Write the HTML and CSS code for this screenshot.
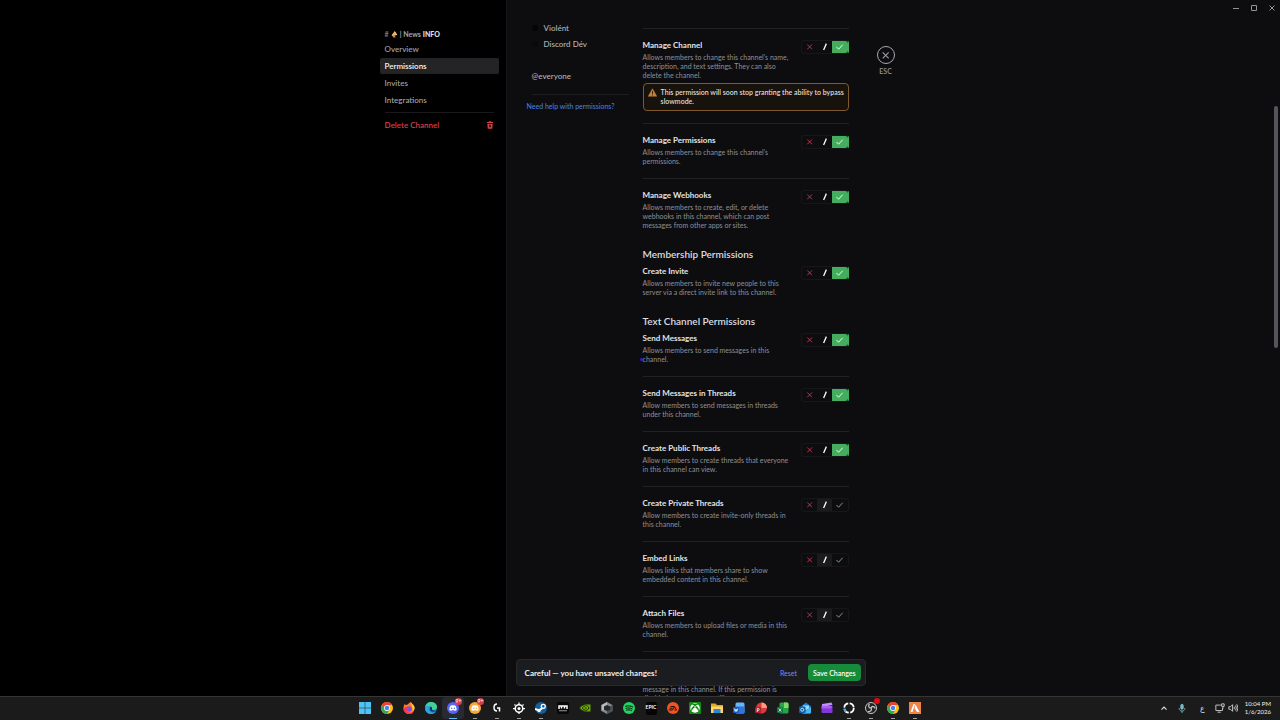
FILE: index.html
```html
<!DOCTYPE html>
<html lang="en">
<head>
  <meta charset="UTF-8" />
  <meta name="viewport" content="width=device-width, initial-scale=1.0"/>
  <title>Channel Settings - Permissions</title>
  <link rel="stylesheet" href="styles.css">
</head>
<body>
  <svg class="sprite" aria-hidden="true">
    <symbol id="i-x" viewBox="0 0 16 16"><path d="M5 4.600l6.400 6.400M11.400 4.600l-6.400 6.400" fill="none" stroke="currentColor" stroke-width="1.300"/></symbol>
    <symbol id="i-slash" viewBox="0 0 16 16"><path d="M10.500 3.500L6.800 12" fill="none" stroke="currentColor" stroke-width="1.700"/></symbol>
    <symbol id="i-check" viewBox="0 0 16 16"><path d="M4 8l2.800 3 5.400-6" fill="none" stroke="currentColor" stroke-width="1.300"/></symbol>
    <symbol id="i-chrome" viewBox="0 0 24 24">
      <circle cx="12" cy="12" r="12" fill="#fbc116"/>
      <path d="M1.6 6A12 12 0 0 1 22.4 6H12z" fill="#ea4335"/>
      <path d="M1.6 6A12 12 0 0 0 12 24l5.2-9-5.2 3-5.2-3z" fill="#34a853"/>
      <path d="M1.6 6l5.2 9L12 6z" fill="#ea4335"/>
      <path d="M1.6 6l5.2 9 5.2 2z" fill="#34a853"/>
      <circle cx="12" cy="12" r="5.8" fill="#fff"/><circle cx="12" cy="12" r="4.4" fill="#4285f4"/>
    </symbol>
    <symbol id="i-discord" viewBox="0 0 24 24">
      <path d="M7 7.5c3-1.300 7-1.300 10 0 1.600 2.500 2.500 5.500 2.300 8.500-1.200 1-2.400 1.500-3.700 1.800l-.9-1.500c-1.800.5-3.600.5-5.400 0l-.9 1.500c-1.300-.3-2.500-.8-3.700-1.800-.2-3 .7-6 2.300-8.500z" fill="#fff"/>
      <circle cx="9.300" cy="12.700" r="1.500"/><circle cx="14.700" cy="12.700" r="1.500"/>
    </symbol>
  </svg>

  <div class="app">
    <aside class="sidebar">
      <nav class="side-nav">
        <h2 class="side-title">
          <span class="hash">#</span>
          <svg class="horn" viewBox="0 0 12 12"><path d="M1 7l5-6 4 6-7 2z" fill="#f2b063"/><path d="M2 8l3 3.500 3-1-2-3z" fill="#d98a4a"/><path d="M6 1l4 6" stroke="#f0cf8a" stroke-width="1.800"/></svg>
          <span>| News</span> <b>INFO</b>
        </h2>
        <a class="side-item" href="#overview">Overview</a>
        <a class="side-item active" href="#permissions">Permissions</a>
        <a class="side-item" href="#invites">Invites</a>
        <a class="side-item" href="#integrations">Integrations</a>
        <hr class="side-line">
        <a class="side-item danger" href="#delete">Delete Channel
          <svg viewBox="0 0 12 12"><path d="M1.500 1.500H4L4.500.5h3L8 1.500h2.500V3h-9z" fill="currentColor"/><path fill-rule="evenodd" d="M2 4h8l-.6 7.500H2.600zM4.500 5.500v4h1v-4zM6.500 5.500v4h1v-4z" fill="currentColor"/></svg>
        </a>
      </nav>
    </aside>

    <main class="content">
      <section class="roles">
        <a class="role" href="#violent"><i class="dot"></i>Violént</a>
        <a class="role" href="#dev"><i class="dot faint"></i>Discord Dév</a>
        <a class="role everyone" href="#everyone">@everyone</a>
        <hr>
        <a class="help" href="#help">Need help with permissions?</a>
      </section>

      <form class="perms" id="perms">
        <div class="perm">
          <div class="perm-text">
            <h3>Manage Channel</h3>
            <p>Allows members to change this channel’s name, description, and text settings. They can also delete the channel.</p>
          </div>
          <fieldset class="toggle" aria-label="Manage Channel">
            <label class="deny"><input type="radio" name="channel" aria-label="Deny"><svg><use href="#i-x"/></svg></label>
            <label class="pass"><input type="radio" name="channel" aria-label="Inherit"><svg><use href="#i-slash"/></svg></label>
            <label class="allow"><input type="radio" name="channel" aria-label="Allow" checked><svg><use href="#i-check"/></svg></label>
          </fieldset>
          <div class="notice">
            <svg viewBox="0 0 20 20"><path d="M10 1.500L19.500 18.500H.5z" fill="#c98235" stroke="#c98235" stroke-linejoin="round"/><path d="M10 7v6M10 14.500v2" stroke="#17120c" stroke-width="2"/></svg>
            <p>This permission will soon stop granting the ability to bypass slowmode.</p>
          </div>
        </div>
        <div class="perm">
          <div class="perm-text">
            <h3>Manage Permissions</h3>
            <p>Allows members to change this channel’s permissions.</p>
          </div>
          <fieldset class="toggle" aria-label="Manage Permissions">
            <label class="deny"><input type="radio" name="permissions" aria-label="Deny"><svg><use href="#i-x"/></svg></label>
            <label class="pass"><input type="radio" name="permissions" aria-label="Inherit"><svg><use href="#i-slash"/></svg></label>
            <label class="allow"><input type="radio" name="permissions" aria-label="Allow" checked><svg><use href="#i-check"/></svg></label>
          </fieldset>
        </div>
        <div class="perm">
          <div class="perm-text">
            <h3>Manage Webhooks</h3>
            <p>Allows members to create, edit, or delete webhooks in this channel, which can post messages from other apps or sites.</p>
          </div>
          <fieldset class="toggle" aria-label="Manage Webhooks">
            <label class="deny"><input type="radio" name="webhooks" aria-label="Deny"><svg><use href="#i-x"/></svg></label>
            <label class="pass"><input type="radio" name="webhooks" aria-label="Inherit"><svg><use href="#i-slash"/></svg></label>
            <label class="allow"><input type="radio" name="webhooks" aria-label="Allow" checked><svg><use href="#i-check"/></svg></label>
          </fieldset>
        </div>

        <h2>Membership Permissions</h2>
        <div class="perm first">
          <div class="perm-text">
            <h3>Create Invite</h3>
            <p>Allows members to invite new people to this server via a direct invite link to this channel.</p>
          </div>
          <fieldset class="toggle" aria-label="Create Invite">
            <label class="deny"><input type="radio" name="invite" aria-label="Deny"><svg><use href="#i-x"/></svg></label>
            <label class="pass"><input type="radio" name="invite" aria-label="Inherit"><svg><use href="#i-slash"/></svg></label>
            <label class="allow"><input type="radio" name="invite" aria-label="Allow" checked><svg><use href="#i-check"/></svg></label>
          </fieldset>
        </div>

        <h2>Text Channel Permissions</h2>
        <div class="perm first">
          <div class="perm-text">
            <h3>Send Messages</h3>
            <p class="marked">Allows members to send messages in this channel.</p>
          </div>
          <fieldset class="toggle" aria-label="Send Messages">
            <label class="deny"><input type="radio" name="send" aria-label="Deny"><svg><use href="#i-x"/></svg></label>
            <label class="pass"><input type="radio" name="send" aria-label="Inherit"><svg><use href="#i-slash"/></svg></label>
            <label class="allow"><input type="radio" name="send" aria-label="Allow" checked><svg><use href="#i-check"/></svg></label>
          </fieldset>
        </div>
        <div class="perm">
          <div class="perm-text">
            <h3>Send Messages in Threads</h3>
            <p>Allow members to send messages in threads under this channel.</p>
          </div>
          <fieldset class="toggle" aria-label="Send Messages in Threads">
            <label class="deny"><input type="radio" name="threads" aria-label="Deny"><svg><use href="#i-x"/></svg></label>
            <label class="pass"><input type="radio" name="threads" aria-label="Inherit"><svg><use href="#i-slash"/></svg></label>
            <label class="allow"><input type="radio" name="threads" aria-label="Allow" checked><svg><use href="#i-check"/></svg></label>
          </fieldset>
        </div>
        <div class="perm">
          <div class="perm-text">
            <h3>Create Public Threads</h3>
            <p>Allow members to create threads that everyone in this channel can view.</p>
          </div>
          <fieldset class="toggle" aria-label="Create Public Threads">
            <label class="deny"><input type="radio" name="public" aria-label="Deny"><svg><use href="#i-x"/></svg></label>
            <label class="pass"><input type="radio" name="public" aria-label="Inherit"><svg><use href="#i-slash"/></svg></label>
            <label class="allow"><input type="radio" name="public" aria-label="Allow" checked><svg><use href="#i-check"/></svg></label>
          </fieldset>
        </div>
        <div class="perm">
          <div class="perm-text">
            <h3>Create Private Threads</h3>
            <p>Allow members to create invite-only threads in this channel.</p>
          </div>
          <fieldset class="toggle" aria-label="Create Private Threads">
            <label class="deny"><input type="radio" name="private" aria-label="Deny"><svg><use href="#i-x"/></svg></label>
            <label class="pass"><input type="radio" name="private" aria-label="Inherit" checked><svg><use href="#i-slash"/></svg></label>
            <label class="allow"><input type="radio" name="private" aria-label="Allow"><svg><use href="#i-check"/></svg></label>
          </fieldset>
        </div>
        <div class="perm">
          <div class="perm-text">
            <h3>Embed Links</h3>
            <p>Allows links that members share to show embedded content in this channel.</p>
          </div>
          <fieldset class="toggle" aria-label="Embed Links">
            <label class="deny"><input type="radio" name="embed" aria-label="Deny"><svg><use href="#i-x"/></svg></label>
            <label class="pass"><input type="radio" name="embed" aria-label="Inherit" checked><svg><use href="#i-slash"/></svg></label>
            <label class="allow"><input type="radio" name="embed" aria-label="Allow"><svg><use href="#i-check"/></svg></label>
          </fieldset>
        </div>
        <div class="perm">
          <div class="perm-text">
            <h3>Attach Files</h3>
            <p>Allows members to upload files or media in this channel.</p>
          </div>
          <fieldset class="toggle" aria-label="Attach Files">
            <label class="deny"><input type="radio" name="attach" aria-label="Deny"><svg><use href="#i-x"/></svg></label>
            <label class="pass"><input type="radio" name="attach" aria-label="Inherit" checked><svg><use href="#i-slash"/></svg></label>
            <label class="allow"><input type="radio" name="attach" aria-label="Allow"><svg><use href="#i-check"/></svg></label>
          </fieldset>
        </div>
        <div class="perm">
          <div class="perm-text">
            <h3>Add Reactions</h3>
            <p>Allows members to add new emoji reactions to a message in this channel. If this permission is disabled, members can still react using any existing reactions.</p>
          </div>
        </div>
      </form>

      <div class="close">
        <button type="button" aria-label="Close"><svg viewBox="0 0 16 16"><use href="#i-x"/></svg></button>
        <span>ESC</span>
      </div>

      <div class="window-buttons">
        <button type="button" aria-label="Minimize"><svg viewBox="0 0 8 8"><path d="M1 4.500h6"/></svg></button>
        <button type="button" aria-label="Maximize"><svg viewBox="0 0 8 8"><path d="M1.500 1.500h5v5h-5z"/></svg></button>
        <button type="button" aria-label="Close window"><svg viewBox="0 0 8 8"><path d="M1.500 1.500l5 5M6.500 1.500l-5 5"/></svg></button>
      </div>
      <div class="scrollbar"></div>

      <div class="unsaved">
        <strong>Careful — you have unsaved changes!</strong>
        <button class="reset" type="reset" form="perms">Reset</button>
        <button class="save" type="submit" form="perms">Save Changes</button>
      </div>
    </main>
  </div>

  <footer class="taskbar">
    <div class="apps">
      <button aria-label="Start"><svg viewBox="0 0 24 24"><path d="M0 0h11.500v11.500H0zM12.500 0H24v11.500H12.500zM0 12.500h11.500V24H0zM12.500 12.500H24V24H12.500z" fill="#4cc2f5"/></svg></button>
      <button aria-label="Chrome"><svg><use href="#i-chrome"/></svg></button>
      <button aria-label="Firefox"><svg viewBox="0 0 24 24"><path d="M12 2c2-1 3-2 4-2 0 3 8 5 7 14-1 6-6 10-11 10S1 20 1 13c0-4 1-7 3-10 0 2 1 3 2 3 2-1 4-1 6-4z" fill="#ff7b29"/><path d="M16 0c0 4 8 5 7 13-1 3-2 3-4 5 2-7-3-10-3-18z" fill="#ffd43b"/><circle cx="12" cy="14" r="5.500" fill="#8a4be0"/><path d="M1 13c1 8 7 11 12 11s8-3 9-6c-4 4-12 5-15-1-1-4 2-5 5-5-2-3-6-3-8-1z" fill="#f5364f"/></svg></button>
      <button aria-label="Edge"><svg viewBox="0 0 24 24"><circle cx="12" cy="12" r="12" fill="#1878c9"/><path d="M0 11C1 4 6 0 12 0c8 0 12 5 12 10 0 4-3 6-7 6-3 0-4-1-3-3 1-5-8-7-14-2z" fill="#41cf9a"/><path d="M0 12c3-5 9-5 11-2-4 3-2 10 4 11 3 0 5-1 7-2-3 4-7 5-10 5C5 24 0 19 0 12z" fill="#2aa5df"/><path d="M11 10c-3 4-1 9 5 9 3 0 5-1 6-2-3 1-6 0-7-1-2-1-1-3-1-4 0-1-1-2-3-2z" fill="#15365d"/></svg></button>
      <button class="open current" aria-label="Discord"><svg viewBox="0 0 24 24"><circle cx="12" cy="12" r="12" fill="#5865f2"/><use href="#i-discord" fill="#5865f2"/></svg><span class="badge">9+</span></button>
      <button class="open" aria-label="Discord Canary"><svg viewBox="0 0 24 24"><circle cx="12" cy="12" r="12" fill="#f5a83c"/><use href="#i-discord" fill="#f5a83c"/></svg><span class="badge">9+</span></button>
      <button class="open" aria-label="Logitech G Hub"><svg viewBox="0 0 24 24"><path d="M12 4C4 4 4 18 12 18M12 12h5v7" fill="none" stroke="#fff" stroke-width="3"/></svg></button>
      <button class="open" aria-label="SteelSeries"><svg viewBox="0 0 24 24"><g fill="none" stroke="#fff"><circle cx="12" cy="13" r="7.500" stroke-width="3"/><path d="M12 6V1M5 13H0M24 13h-5M12 20v4M5 7L3 5M19 7l2-2" stroke-width="2.500"/></g><circle cx="12" cy="13" r="3" fill="#fff"/></svg></button>
      <button class="open" aria-label="Steam"><svg viewBox="0 0 24 24"><circle cx="12" cy="12" r="12" fill="#14609c"/><path d="M0 14l8 3 7-5" fill="none" stroke="#fff" stroke-width="4"/><circle cx="16.500" cy="8.500" r="4" fill="#14609c" stroke="#fff" stroke-width="2.500"/><circle cx="8" cy="17" r="3.500" fill="#fff"/></svg></button>
      <button aria-label="Mixer"><svg viewBox="0 0 24 24"><rect width="24" height="24" rx="4" fill="#070707"/><path d="M4 14V8h16v6M9 8v5M15 8v5" fill="none" stroke="#fff" stroke-width="3"/><path d="M4 17.500h16" stroke="#999" stroke-width="2"/></svg></button>
      <button aria-label="NVIDIA"><svg viewBox="0 0 24 24"><path d="M10 5h13v14H10z" fill="#6aa500"/><path d="M1 12c3-5 7-7 12-6 3 1 5 3 7 6-4 5-8 7-12 6-3-1-5-3-7-6z" fill="#76b900" stroke="#192b0b" stroke-width="2"/><path d="M6 12c2-3 5-4 9 0-3 4-6 4-9 0z" fill="none" stroke="#192b0b" stroke-width="2"/></svg></button>
      <button aria-label="Cube"><svg viewBox="0 0 24 24"><path d="M12 0l11 6v12l-11 6-11-6V6z" fill="#858a90"/><path d="M12 12V0L1 6v12z" fill="#b5b9bd"/><path d="M12 12l11-6v12l-11 6z" fill="#4a4e53"/><path d="M12 6l6 3v6l-6 3-6-3V9z" fill="#24272a"/></svg></button>
      <button aria-label="Spotify"><svg viewBox="0 0 24 24"><circle cx="12" cy="12" r="12" fill="#1ed760"/><path d="M5 8.500c5-1.500 10-1 14.500 1.300M6 12.500c4-1.200 8.500-.8 12.300 1.200M7 16.200c3.500-1 7-.6 10 1" fill="none" stroke="#111" stroke-width="2" stroke-linecap="round"/></svg></button>
      <button class="epic" aria-label="Epic Games"><span>EPIC</span></button>
      <button aria-label="EA"><svg viewBox="0 0 24 24"><circle cx="12" cy="12" r="12" fill="#f05423"/><path d="M7 9h7M5 12.500h6M4 16h7l4-7 4 7h-4" fill="none" stroke="#24100b" stroke-width="2"/></svg></button>
      <button aria-label="Xbox"><svg viewBox="0 0 24 24"><rect width="24" height="24" rx="2" fill="#138a16"/><circle cx="12" cy="12" r="9.500" fill="#fff"/><path d="M5 5c3 0 5 2 7 4 2-2 4-4 7-4-2-2-5-2-7-1-2-1-5-1-7 1zM12 10c4 3 6 6 7 9 2-4 0-8-4-11zM12 10c-4 3-6 6-7 9-2-4 0-8 4-11z" fill="#138a16"/></svg></button>
      <button aria-label="File Explorer"><svg viewBox="0 0 24 24"><path d="M0 3h9l3 3h12v16H0z" fill="#e5a823"/><path d="M0 9h24v13H0z" fill="#ffd766"/><path d="M5 14h14v8H5z" fill="#2b87d3"/></svg></button>
      <button aria-label="Word"><svg viewBox="0 0 24 24"><rect x="5" y="1" width="18" height="22" rx="3" fill="#63b8f5"/><path d="M5 9h18v11a3 3 0 0 1-3 3H8a3 3 0 0 1-3-3z" fill="#2f74e0"/><rect y="10" width="12" height="12" rx="2" fill="#185abd"/><path d="M2.500 13l2 6 1.500-5 1.500 5 2-6" fill="none" stroke="#fff" stroke-width="1.500"/></svg></button>
      <button aria-label="PowerPoint"><svg viewBox="0 0 24 24"><circle cx="13" cy="12" r="11" fill="#d83b3b"/><path d="M13 1a11 11 0 0 1 11 11H13z" fill="#ff9c7d"/><rect y="10" width="12" height="12" rx="2" fill="#b31e2f"/><path d="M4.500 20v-7h2a2 2 0 0 1 0 4h-2" fill="none" stroke="#fff" stroke-width="1.500"/></svg></button>
      <button aria-label="Excel"><svg viewBox="0 0 24 24"><rect x="5" y="1" width="18" height="22" rx="3" fill="#27a348"/><path d="M14 1h6a3 3 0 0 1 3 3v8h-9z" fill="#7edb67"/><rect y="10" width="12" height="12" rx="2" fill="#107c41"/><path d="M3.500 13l5 6M8.500 13l-5 6" stroke="#fff" stroke-width="1.500"/></svg></button>
      <button aria-label="Outlook"><svg viewBox="0 0 24 24"><path d="M4 9l10-8 10 8v11a3 3 0 0 1-3 3H7a3 3 0 0 1-3-3z" fill="#1684d8"/><path d="M8 7h12v6l-6 3-6-3z" fill="#9adcfb"/><path d="M24 10v10a3 3 0 0 1-3 3H7z" fill="#42baf2"/><rect y="9" width="13" height="13" rx="2" fill="#0f5fa8"/><circle cx="6.500" cy="15.500" r="3" fill="none" stroke="#fff" stroke-width="1.500"/></svg></button>
      <button aria-label="Clipchamp"><svg viewBox="0 0 24 24"><path d="M2 4l19-3 2 5-21 4z" fill="#c28cff"/><rect x="1" y="8" width="22" height="14" rx="2" fill="#8238d8"/><path d="M1 8h22l-3 5H1z" fill="#a95cf2"/></svg></button>
      <button class="open" aria-label="Ring"><svg viewBox="0 0 24 24"><circle cx="12" cy="12" r="9.500" fill="none" stroke="#fff" stroke-width="3.500" stroke-dasharray="12 3"/><path d="M3 13a9 9 0 0 0 3 6" fill="none" stroke="#48a8d8" stroke-width="4"/></svg></button>
      <button class="open" aria-label="OBS Studio"><svg viewBox="0 0 24 24"><circle cx="12" cy="12" r="11" fill="#222" stroke="#c9c9c9" stroke-width="2"/><path d="M12 12c-5 0-6-5-3-8M12 12c2-5 8-3 8 1M12 12c3 4-1 8-6 7" fill="none" stroke="#c9c9c9" stroke-width="2.500"/></svg><span class="badge rec"></span></button>
      <button class="open" aria-label="Chrome profile"><svg><use href="#i-chrome"/></svg></button>
      <button class="open" aria-label="FiveM"><svg viewBox="0 0 24 24"><rect width="24" height="24" fill="#ee8548"/><path d="M3 20L9 4h3L7 20zM11 12l2-7 8 15h-5z" fill="#fff"/></svg></button>
    </div>
    <div class="tray">
      <svg class="chev" viewBox="0 0 12 12"><path d="M3 8l3-3 3 3" stroke="#ddd" stroke-width="1.400"/></svg>
      <svg class="mic" viewBox="0 0 12 12"><rect x="4.500" y="1.500" width="3" height="6" rx="1.500" fill="#79b8c4" stroke="#79b8c4"/><path d="M2.500 6c0 5 7 5 7 0M6 9.500V12" stroke="#79b8c4"/></svg>
      <span class="lang">ع</span>
      <svg class="net" viewBox="0 0 12 12"><path d="M7 2.500H1v6.500h8V6M3 11h4M8 1h3v3H8zM9.500 4v3" stroke="#ddd"/></svg>
      <svg class="vol" viewBox="0 0 12 12"><path d="M1 4.500h2L5.500 2v8L3 7.500H1zM7.500 4.500v3M9 3q2 3 0 6M10.500 1.500q3 4.500 0 9" stroke="#ddd"/></svg>
      <time class="clock">10:04 PM<br>1/6/2026</time>
    </div>
  </footer>
</body>
</html>
```
FILE: styles.css
```css
/* Base */
* { box-sizing: border-box; margin: 0; padding: 0; }
body { font-family: Lato, 'Noto Sans', sans-serif; font-size: 8px; line-height: 12px; background: #000; color: #b2b3b8; height: 100vh; display: flex; flex-direction: column; overflow: hidden; }
a { color: inherit; text-decoration: none; }
button { font: inherit; color: inherit; background: none; border: none; cursor: pointer; }
.sprite { display: none; }

.app { flex: 1; min-height: 0; display: grid; grid-template-columns: 79fr 121fr; }

/* Sidebar */
.sidebar { background: #000; display: flex; justify-content: flex-end; padding: 28px 7px 0 0; }
.side-nav { width: 119px; font-weight: 500; }
.side-title { display: flex; align-items: center; gap: 2px; height: 12px; margin-bottom: 1px; padding-left: 5px; font-size: 7px; font-weight: 700; color: #a5a5a9; }
.side-title b { color: #e0e0e2; }
.hash { color: #77777b; }
.horn { width: 7px; height: 7px; }
.side-item { display: flex; align-items: center; justify-content: space-between; height: 16px; margin-bottom: 1px; padding: 0 5px; border-radius: 2px; color: #a6a7ac; }
.side-item.active { background: #242426; color: #f4f4f6; font-weight: 600; }
.side-line { border: none; border-top: 1px solid #19191b; margin: 4px 5px; }
.side-item.danger { color: #d83f46; font-weight: 600; }
.danger svg { width: 8px; height: 8px; }

/* Content */
.content { position: relative; min-width: 0; min-height: 0; overflow: hidden; background: #0d0d0f; border-left: 1px solid #151517; display: flex; align-items: flex-start; }
.roles { width: 102px; margin: 20px 14px 0 20px; display: flex; flex-direction: column; font-weight: 500; }
.role { display: flex; align-items: center; height: 16px; padding-left: 5px; }
.role.everyone { margin-top: 16px; }
.dot { width: 6px; height: 6px; margin-right: 6px; border-radius: 50%; background: #050506; }
.dot.faint { background: #0a0a0b; }
.roles hr { border: none; border-top: 1px solid #1d1d20; margin: 10px 0 5px 5px; }
.help { color: #4a83e6; font-size: 7px; font-weight: 400; }

/* Permission list */
.perms { width: 206px; margin-top: 28px; }
.perms h2 { font-size: 10px; line-height: 12px; font-weight: 600; color: #dcdde0; margin: 6px 0 5px; }
.perm { display: flex; flex-wrap: wrap; align-items: flex-start; justify-content: space-between; border-top: 1px solid #222225; padding: 10px 0 12px; }
.perm.first { border-top: none; padding-top: 0; }
.perm-text { width: 151px; }
.perm h3 { font-size: 8px; line-height: 12px; font-weight: 700; color: #e2e3e6; margin-bottom: 2px; }
.perm p { font-size: 7px; line-height: 9px; color: #8f9097; }
.marked { display: flow-root; }
.marked::after { content: ''; display: block; width: 3px; height: 3px; margin: -6px 0 3px -3px; border-radius: 50%; background: #2b16ff; }
.toggle { display: flex; margin-top: 1px; border: 1px solid #17171a; border-radius: 3px; overflow: hidden; }
.toggle label { display: block; width: 15px; height: 12px; cursor: pointer; }
.toggle .allow { width: 16px; }
.toggle input { appearance: none; display: block; width: 0; height: 0; }
.toggle svg { display: block; width: 15px; height: 12px; }
.deny { color: #b8384a; }
.pass { color: #fff; }
.allow { color: #7b9c86; }
.pass:has(:checked) { background: #1b1b1d; }
.allow:has(:checked) { background: #45ad5e; color: #e6ffec; }
.toggle:has(.allow :checked) { border-right-color: #45ad5e; }
.notice { flex: 1 0 100%; display: flex; gap: 4px; margin-top: 3px; padding: 4px 1px 4px 4px; border: 1px solid #80592e; border-radius: 4px; background: #17120c; }
.notice svg { flex: none; width: 9px; height: 9px; }
.notice p { color: #dcdcde; font-weight: 600; }

/* Close, window buttons, scrollbar */
.close { margin: 46px 0 0 28px; display: flex; flex-direction: column; align-items: center; font-size: 7px; font-weight: 600; color: #96979c; }
.close button { width: 18px; height: 18px; margin-bottom: 1px; border: 1px solid #a6a7ac; border-radius: 50%; display: grid; place-items: center; }
.close svg { width: 15px; height: 15px; }
.window-buttons { margin-left: auto; padding: 4px 4px 0 0; display: flex; gap: 10px; }
.window-buttons svg { display: block; width: 8px; height: 8px; fill: none; stroke: #929296; }
.scrollbar { position: absolute; top: 106px; right: 2px; width: 4px; height: 242px; border-radius: 2px; background: #55565b; }

/* Unsaved changes bar, floats over the list */
.unsaved { position: absolute; left: 9px; bottom: 10px; width: 350px; padding: 4px; display: flex; align-items: center; background: #1b1c1f; border: 1px solid #28292c; border-radius: 4px; }
.unsaved strong { flex: 1; padding-left: 4px; font-weight: 700; color: #eeeef0; }
.reset { padding: 0 11px; font-size: 7px; color: #7d88f0; }
.save { height: 17px; padding: 0 5px; border-radius: 4px; background: #168c3a; color: #fff; font-size: 7px; font-weight: 600; }

/* Taskbar */
.taskbar { height: 24px; padding-bottom: 1px; background: #1b1b1b; border-top: 1px solid #353535; display: grid; grid-template-columns: 1fr auto 1fr; }
.apps { grid-column: 2; display: flex; }
.apps button { position: relative; width: 22px; display: grid; place-items: center; }
.apps svg { display: block; width: 12px; height: 12px; }
.apps .current { background: #292a31; border-radius: 3px; }
.open::after { content: ''; position: absolute; bottom: 0; left: 9px; width: 4px; height: 1px; background: #a0a0a0; }
.current::after { left: 7px; width: 8px; background: #60bdf0; }
.badge { position: absolute; top: 1px; right: 2px; min-width: 7px; height: 7px; border-radius: 4px; background: #d83f4c; color: #fff; font-size: 5px; line-height: 7px; text-align: center; }
.badge.rec { background: #e00b12; min-width: 6px; height: 6px; }
.epic span { width: 11px; height: 13px; border-radius: 2px; background: #050505; color: #fff; font-size: 5px; line-height: 10px; font-weight: 700; text-align: center; }
.tray { display: flex; align-items: center; justify-content: flex-end; padding-right: 9px; color: #ddd; }
.tray svg { fill: none; }
.chev { width: 10px; height: 10px; margin-right: 8px; }
.mic { width: 10px; height: 10px; margin-right: 13px; }
.lang { font-size: 8px; margin-right: 10px; }
.net, .vol { width: 10px; height: 10px; margin-right: 3px; }
.clock { margin-left: 4px; font-size: 6px; line-height: 8px; text-align: right; color: #f2f2f2; }
```
